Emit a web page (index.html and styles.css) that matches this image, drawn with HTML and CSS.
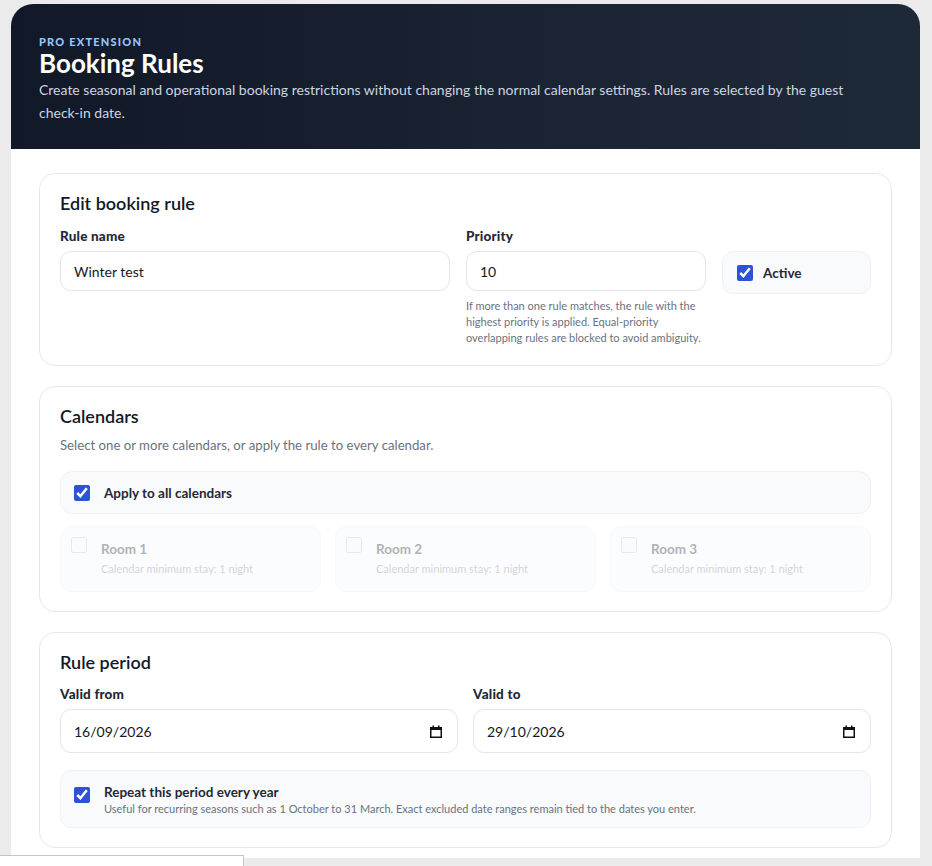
FILE: index.html
```html
<!DOCTYPE html>
<html lang="en">
<head>
<meta charset="utf-8">
<title>Booking Rules</title>
<link rel="stylesheet" href="styles.css">
</head>
<body>
<div class="app">
  <header class="hero">
    <div class="eyebrow">PRO EXTENSION</div>
    <h1 class="hero-title">Booking Rules</h1>
    <p class="hero-desc">Create seasonal and operational booking restrictions without changing the normal calendar settings. Rules are selected by the guest <span class="nowrap">check-in</span> date.</p>
  </header>

  <main class="content">
    <section class="card card-first">
      <h2 class="card-title">Edit booking rule</h2>
      <div class="grid-rule">
        <div class="field">
          <label class="label">Rule name</label>
          <input class="input" type="text" value="Winter test">
        </div>
        <div class="field">
          <label class="label">Priority</label>
          <input class="input" type="text" value="10">
          <p class="help">If more than one rule matches, the rule with the highest priority is applied. Equal-priority overlapping rules are blocked to avoid ambiguity.</p>
        </div>
        <div class="field field-active">
          <label class="check-box active-box"><input type="checkbox" class="cb" checked><span class="check-text">Active</span></label>
        </div>
      </div>
    </section>

    <section class="card">
      <h2 class="card-title">Calendars</h2>
      <p class="card-desc">Select one or more calendars, or apply the rule to every calendar.</p>
      <label class="check-box apply-box"><input type="checkbox" class="cb" checked><span class="check-text">Apply to all calendars</span></label>
      <div class="rooms">
        <label class="room"><input type="checkbox" class="cb" disabled><span class="room-text"><span class="room-name">Room 1</span><span class="room-sub">Calendar minimum stay: 1 night</span></span></label>
        <label class="room"><input type="checkbox" class="cb" disabled><span class="room-text"><span class="room-name">Room 2</span><span class="room-sub">Calendar minimum stay: 1 night</span></span></label>
        <label class="room"><input type="checkbox" class="cb" disabled><span class="room-text"><span class="room-name">Room 3</span><span class="room-sub">Calendar minimum stay: 1 night</span></span></label>
      </div>
    </section>

    <section class="card">
      <h2 class="card-title title-tight">Rule period</h2>
      <div class="grid-period">
        <div class="field">
          <label class="label">Valid from</label>
          <div class="date-input">
            <input class="date-text" type="text" value="16/09/2026">
            <svg class="cal-icon" width="12" height="13" viewBox="0 0 12 13" aria-hidden="true"><path d="M0.75 2.75h10.5v9.5H0.75z" fill="none" stroke="#111" stroke-width="1.5"/><rect x="0" y="2" width="12" height="3" fill="#111"/><rect x="2.5" y="0.5" width="1.5" height="2" fill="#111"/><rect x="8" y="0.5" width="1.5" height="2" fill="#111"/></svg>
          </div>
        </div>
        <div class="field">
          <label class="label">Valid to</label>
          <div class="date-input">
            <input class="date-text" type="text" value="29/10/2026">
            <svg class="cal-icon" width="12" height="13" viewBox="0 0 12 13" aria-hidden="true"><path d="M0.75 2.75h10.5v9.5H0.75z" fill="none" stroke="#111" stroke-width="1.5"/><rect x="0" y="2" width="12" height="3" fill="#111"/><rect x="2.5" y="0.5" width="1.5" height="2" fill="#111"/><rect x="8" y="0.5" width="1.5" height="2" fill="#111"/></svg>
          </div>
        </div>
      </div>
      <label class="check-box repeat-box"><input type="checkbox" class="cb" checked><span class="repeat-text"><span class="repeat-title">Repeat this period every year</span><span class="repeat-sub">Useful for recurring seasons such as 1 October to 31 March. Exact excluded date ranges remain tied to the dates you enter.</span></span></label>
    </section>
  </main>
</div>
<div class="corner-panel"></div>
</body>
</html>
```

FILE: styles.css
```css
* { box-sizing: border-box; }
html, body { margin: 0; padding: 0; }
body {
  background: #ebebec;
  font-family: Lato, "Noto Sans", "DejaVu Sans", sans-serif;
  color: #111827;
  overflow: hidden;
}
.app {
  margin: 4px 12px 0 11px;
  width: 909px;
  border-radius: 22px 22px 0 0;
  overflow: hidden;
  background: #ffffff;
}
.hero {
  background: linear-gradient(90deg, #111827 0%, #1b2433 60%, #1e2938 100%);
  padding: 31px 28px 25px 28px;
}
.eyebrow {
  font-size: 11px;
  line-height: 13px;
  font-weight: 900;
  letter-spacing: 1.2px;
  color: #93c5fd;
}
.hero-title {
  margin: 0;
  font-size: 26px;
  line-height: 30px;
  font-weight: 700;
  color: #ffffff;
}
.hero-desc {
  margin: 0;
  max-width: 830px;
  font-size: 14px;
  line-height: 23px;
  color: #cbd5e1;
}
.nowrap { white-space: nowrap; }
.content {
  padding: 24px 28px 10px 28px;
  display: flex;
  flex-direction: column;
  gap: 20px;
}
.card {
  border: 1px solid #e5e7eb;
  border-radius: 16px;
  padding: 17px 20px 19px 20px;
  background: #fff;
}
.card-title {
  margin: 0 0 12px 0;
  font-size: 18px;
  line-height: 24px;
  font-weight: 600;
  color: #111827;
}
.title-tight { margin-bottom: 11px; }
.card-desc {
  margin: -5px 0 16px 0;
  font-size: 13.2px;
  line-height: 20px;
  color: #6b7280;
}
.grid-rule {
  display: grid;
  grid-template-columns: 390px 240px 1fr;
  gap: 16px;
}
.grid-period {
  display: grid;
  grid-template-columns: 1fr 1fr;
  gap: 15px;
}
.field { display: flex; flex-direction: column; }
.field-active { padding-top: 24px; }
.label {
  font-size: 13.5px;
  line-height: 18px;
  font-weight: 900;
  letter-spacing: 0.2px;
  color: #1f2937;
  margin-bottom: 6px;
}
.input {
  height: 40px;
  border: 1px solid #e2e5ea;
  border-radius: 11px;
  padding: 0 13px;
  font-family: inherit;
  font-size: 14px;
  color: #111827;
  background: #fff;
  outline: none;
}
.help {
  margin: 7px 0 0 0;
  font-size: 11px;
  line-height: 16px;
  color: #6b7280;
}
.check-box {
  display: flex;
  align-items: center;
  gap: 14px;
  background: #f8fafc;
  border: 1px solid #eef1f5;
  border-radius: 11px;
  padding: 0 13px;
}
.cb {
  width: 16px;
  height: 16px;
  margin: 0;
  flex: none;
  accent-color: #2c52d8;
}
.active-box { height: 43px; gap: 10px; padding: 0 14px; }
.check-text {
  font-size: 13.5px;
  line-height: 18px;
  font-weight: 700;
  color: #1f2937;
}
.apply-box { height: 43px; border-radius: 12px; }
.rooms {
  margin-top: 12px;
  display: grid;
  grid-template-columns: 1fr 1fr 1fr;
  gap: 14px;
  opacity: 0.45;
}
.room {
  display: flex;
  align-items: flex-start;
  gap: 14px;
  padding: 10px 10px 14px 10px;
  background: #f8fafc;
  border: 1px solid #eef1f5;
  border-radius: 11px;
}
.room-text { display: flex; flex-direction: column; gap: 3px; padding-top: 3px; }
.room-name {
  font-size: 13.5px;
  line-height: 18px;
  font-weight: 700;
  color: #4b5563;
}
.room-sub {
  font-size: 11px;
  line-height: 16px;
  color: #9ca3af;
}
.date-input {
  height: 44px;
  display: flex;
  align-items: center;
  border: 1px solid #e2e5ea;
  border-radius: 11px;
  padding: 0 15px 0 13px;
  background: #fff;
}
.date-text {
  flex: 1;
  min-width: 0;
  border: 0;
  outline: none;
  padding: 0;
  font-family: inherit;
  font-size: 14px;
  color: #111827;
  background: transparent;
}
.cal-icon { flex: none; }
.repeat-box {
  margin-top: 17px;
  align-items: flex-start;
  padding: 12px 14px 10px 13px;
}
.repeat-box .cb { margin-top: 4px; }
.repeat-text { display: flex; flex-direction: column; }
.repeat-title {
  font-size: 13.5px;
  line-height: 18px;
  font-weight: 700;
  color: #1f2937;
}
.repeat-sub {
  font-size: 11px;
  line-height: 16px;
  color: #6b7280;
}
.corner-panel {
  position: fixed;
  left: 0;
  top: 855px;
  width: 244px;
  height: 40px;
  background: #fff;
  border: 1px solid #c3c4c7;
  border-left: 0;
}
```
